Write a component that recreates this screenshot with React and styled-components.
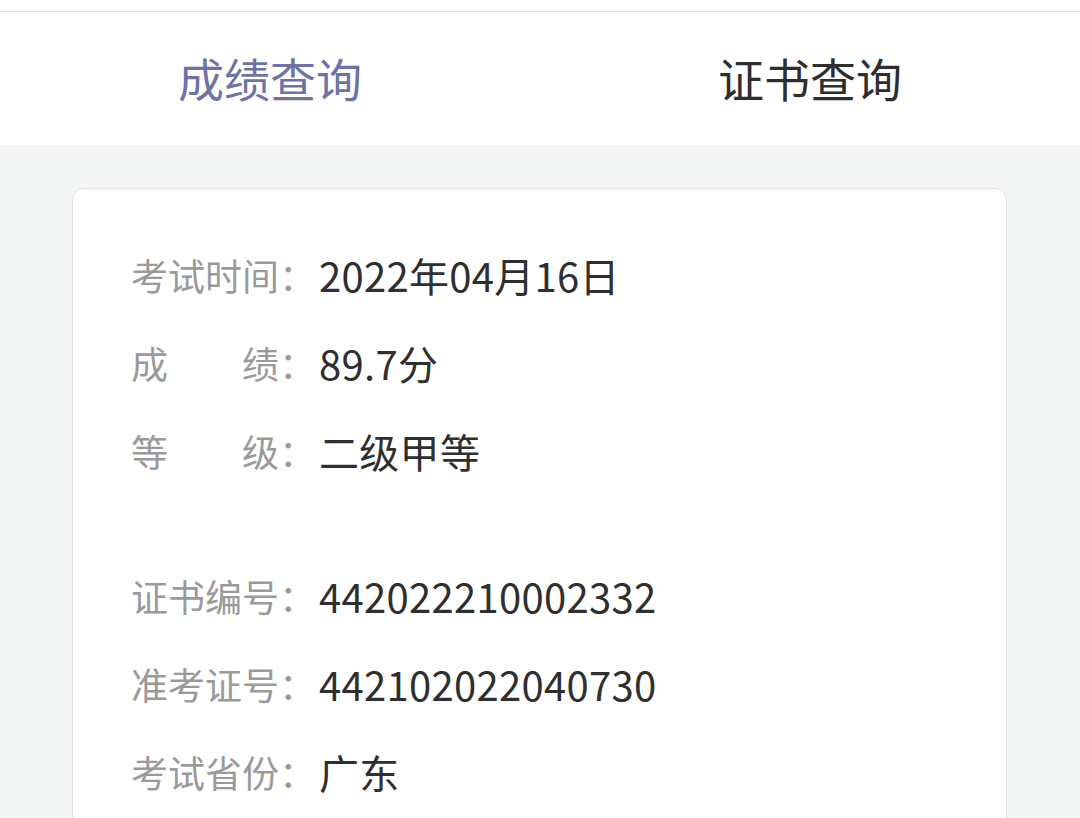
import styled, { createGlobalStyle } from "styled-components";

const GlobalStyle = createGlobalStyle`
  html, body {
    margin: 0;
    padding: 0;
    background: #f4f5f5;
    font-family: "Noto Sans CJK SC", "Noto Sans", sans-serif;
  }
`;

const scoreRows = [
  { label: "考试时间", value: "2022年04月16日" },
  { label: "成绩", value: "89.7分" },
  { label: "等级", value: "二级甲等" },
];

const certRows = [
  { label: "证书编号", value: "442022210002332" },
  { label: "准考证号", value: "442102022040730" },
  { label: "考试省份", value: "广东" },
];

const App = () => (
  <>
    <GlobalStyle />
    <Page>
      <TopStrip />
      <Tabs>
        <Tab $active>成绩查询</Tab>
        <Tab>证书查询</Tab>
      </Tabs>
      <Content>
        <Card>
          <Group>
            {scoreRows.map(({ label, value }) => (
              <Row key={label}>
                <Label>{label}</Label>
                <Colon>：</Colon>
                <Value>{value}</Value>
              </Row>
            ))}
          </Group>
          <Group>
            {certRows.map(({ label, value }) => (
              <Row key={label}>
                <Label>{label}</Label>
                <Colon>：</Colon>
                <Value>{value}</Value>
              </Row>
            ))}
          </Group>
        </Card>
      </Content>
    </Page>
  </>
);

export default App;

const Page = styled.div`
  width: 1080px;
  height: 818px;
  overflow: hidden;
  display: flex;
  flex-direction: column;
`;

const TopStrip = styled.div`
  flex-shrink: 0;
  height: 11px;
  background: #ffffff;
  border-bottom: 1px solid #e2e2e2;
`;

const Tabs = styled.div`
  flex-shrink: 0;
  height: 133px;
  background: #ffffff;
  display: grid;
  grid-template-columns: 1fr 1fr;
  align-items: center;
`;

const Tab = styled.div`
  text-align: center;
  font-size: 46px;
  line-height: 1;
  padding-bottom: 4px;
  color: ${({ $active }) => ($active ? "#6d73a6" : "#2e2e2e")};
`;

const Content = styled.div`
  flex-shrink: 0;
  padding: 43px 73px 0 72px;
`;

const Card = styled.div`
  background: #ffffff;
  border: 1px solid #e1e3e3;
  border-radius: 12px;
  padding: 42px 59px 120px 58px;
  display: flex;
  flex-direction: column;
  gap: 57px;
`;

const Group = styled.div`
  display: flex;
  flex-direction: column;
`;

const Row = styled.div`
  display: flex;
  align-items: center;
  height: 88px;
`;

const Label = styled.span`
  display: inline-block;
  width: 148px;
  font-size: 37px;
  color: #9a9a9a;
  text-align: justify;
  text-align-last: justify;
`;

const Colon = styled.span`
  font-size: 37px;
  color: #9a9a9a;
  width: 40px;
`;

const Value = styled.span`
  font-size: 40px;
  color: #2f2f2f;
  letter-spacing: 0.3px;
`;
